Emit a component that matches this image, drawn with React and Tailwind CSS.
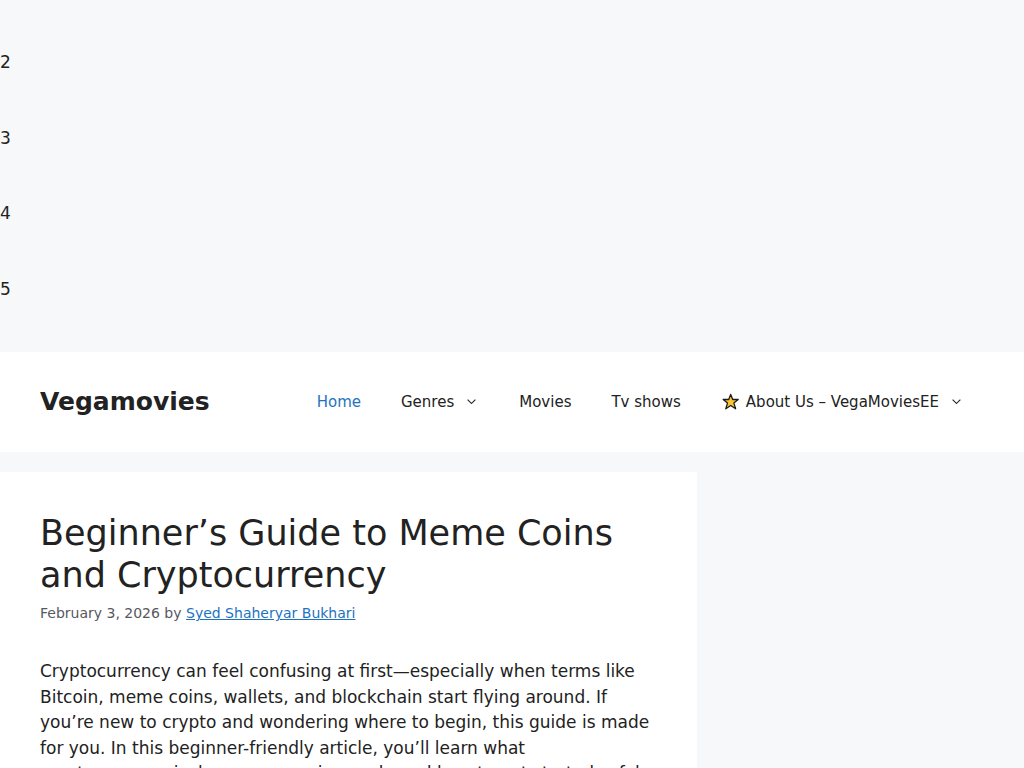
import React from "react";

const spacers = ["2", "3", "4", "5"];

const menuItems = [
  { label: "Home", active: true },
  { label: "Genres", hasMenu: true },
  { label: "Movies" },
  { label: "Tv shows" },
  { label: "About Us – VegaMoviesEE", hasMenu: true, star: true },
];

const ArrowDown = () => (
  <svg
    viewBox="0 26 330 512"
    className="ml-[10px] h-[15px] w-[15px]"
    fill="currentColor"
    aria-hidden="true"
  >
    <path d="M305.913 197.085c0 2.266-1.133 4.815-2.833 6.514L171.087 335.593c-1.7 1.7-4.249 2.832-6.515 2.832s-4.815-1.133-6.515-2.832L26.064 203.599c-1.7-1.7-2.832-4.248-2.832-6.514s1.132-4.816 2.832-6.515l14.162-14.163c1.7-1.699 3.966-2.832 6.515-2.832 2.266 0 4.815 1.133 6.515 2.832l111.316 111.317 111.316-111.317c1.7-1.699 4.249-2.832 6.515-2.832s4.815 1.133 6.515 2.832l14.162 14.163c1.7 1.7 2.833 4.249 2.833 6.515z" />
  </svg>
);

const Star = () => (
  <svg viewBox="0 0 18 18" className="mr-[6px] ml-px h-[18px] w-[18px]" aria-hidden="true">
    <path
      d="M8.7 1.4l2 5.1h5.5l-4.3 3.6 1.7 5.7-4.9-3.3-4.9 3.3 1.7-5.7L1.2 6.5h5.5z"
      fill="#fcc433"
      stroke="#1b1b1b"
      strokeWidth="1.3"
      strokeLinejoin="round"
    />
  </svg>
);

const App = () => {
  return (
    <div className="min-h-screen bg-[#f7f8f9] font-['DejaVu_Sans',sans-serif] text-[17px] leading-normal text-[#222222]">
      <div className="flex flex-col gap-[50px] py-[50px]">
        {spacers.map((item) => (
          <p key={item}>{item}</p>
        ))}
      </div>

      <header className="flex items-center justify-between bg-white px-10 py-5">
        <a href="#" className="text-[25px] leading-[30px] font-bold">
          Vegamovies
        </a>
        <nav>
          <ul className="flex text-[15px] leading-[60px]">
            {menuItems.map((item) => (
              <li key={item.label}>
                <a
                  href="#"
                  className={
                    item.active
                      ? "flex items-center px-5 text-[#1e73be]"
                      : "flex items-center px-5"
                  }
                >
                  {item.star && <Star />}
                  {item.label}
                  {item.hasMenu && <ArrowDown />}
                </a>
              </li>
            ))}
          </ul>
        </nav>
      </header>

      <main className="mt-5 w-[70%] pr-5">
        <article className="bg-white p-10">
          <h1 className="text-[35px] leading-[42px]">
            Beginner’s Guide to Meme Coins and Cryptocurrency
          </h1>
          <div className="mt-[6px] text-[14px] leading-[22px] text-[#575760]">
            February 3, 2026 by{" "}
            <a href="#" className="text-[#1e73be] underline">
              Syed Shaheryar Bukhari
            </a>
          </div>
          <p className="mt-[35px]">
            Cryptocurrency can feel confusing at first—especially when terms
            like Bitcoin, meme coins, wallets, and blockchain start flying
            around. If you’re new to crypto and wondering where to begin, this
            guide is made for you. In this beginner-friendly article, you’ll
            learn what cryptocurrency is, how meme coins work, and how to get
            started safely.
          </p>
        </article>
      </main>
    </div>
  );
};

export default App;
